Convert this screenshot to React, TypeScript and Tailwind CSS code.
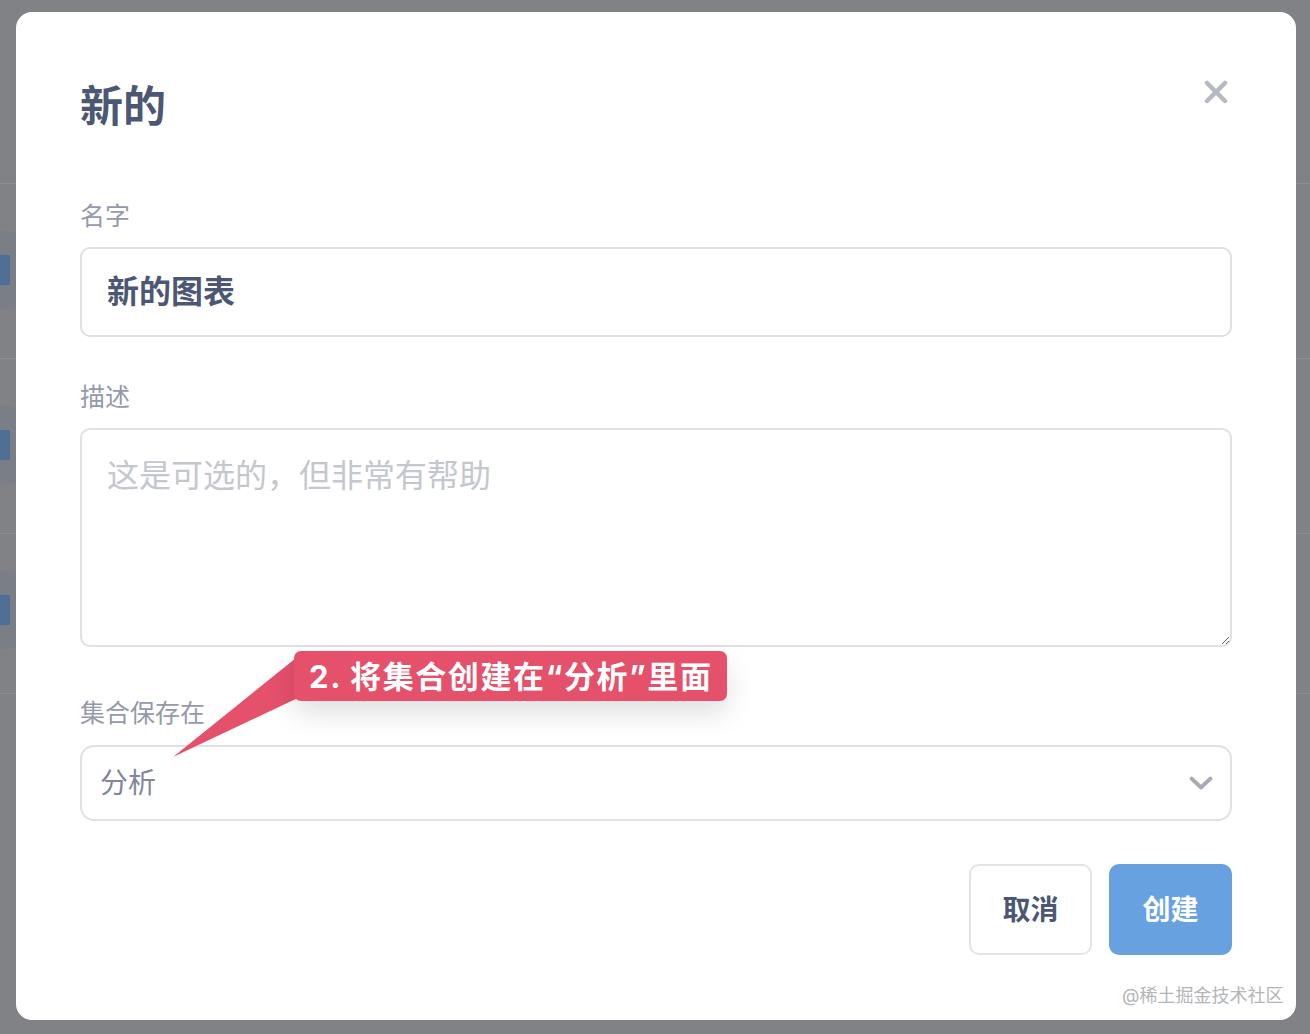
import React from 'react';

const CloseIcon = () => (
  <svg width="24" height="24" viewBox="0 0 24 24" className="block">
    <path d="M3 3 L21 21 M21 3 L3 21" stroke="#b5b9c1" strokeWidth="4.5" strokeLinecap="round" />
  </svg>
);

const Chevron = () => (
  <svg width="24" height="15" viewBox="0 0 24 15" className="block">
    <polyline points="2.5,2.5 12,11.5 21.5,2.5" fill="none" stroke="#a7abb5" strokeWidth="3.8" strokeLinecap="round" strokeLinejoin="round" />
  </svg>
);

const PageBehind = () => (
  <div className="absolute inset-0">
    <div className="absolute left-0 right-0 top-[183px] h-px bg-[#8b8d90]" />
    <div className="absolute left-0 right-0 top-[358px] h-px bg-[#8b8d90]" />
    <div className="absolute left-0 right-0 top-[533px] h-px bg-[#8b8d90]" />
    <div className="absolute left-0 right-0 top-[693px] h-px bg-[#8b8d90]" />
    {[270, 445, 610].map((y) => (
      <div key={y} className="absolute -left-[40px] w-[80px] h-[80px] rounded-full bg-[#7a7f87] flex items-center justify-end pr-[30px]" style={{ top: y - 40 }}>
        <div className="w-[10px] h-[30px] bg-[#4f6f95]" />
      </div>
    ))}
  </div>
);

export default function App() {
  return (
    <div className="relative w-full h-[1034px] bg-[#808285] overflow-hidden font-['Inter','Noto_Sans_CJK_SC',sans-serif]">
      <PageBehind />

      <div className="relative pt-[12px] px-[16px]">
        <div className="w-[1280px] h-[1008px] bg-white rounded-[16px] px-[64px] flex flex-col">
          {/* header */}
          <div className="mt-[60px] h-[68px] flex justify-between items-start">
            <h1 className="h-[68px] flex items-center text-[43px] font-bold text-[#4c5773] leading-none">新的</h1>
            <button className="mt-[8px] mr-[4px]">
              <CloseIcon />
            </button>
          </div>

          <label className="mt-[58px] h-[36px] flex items-center text-[25px] text-[#949aab] leading-none">名字</label>
          <div className="mt-[13px] h-[90px] border-2 border-[#dfe1e6] rounded-[10px] flex items-center pl-[25px]">
            <span className="text-[32px] font-semibold text-[#4c5773] leading-none">新的图表</span>
          </div>

          <label className="mt-[42px] h-[36px] flex items-center text-[25px] text-[#949aab] leading-none">描述</label>
          <textarea
            className="mt-[13px] h-[219px] w-full border-2 border-[#dfe1e6] rounded-[10px] pl-[25px] pt-[22px] text-[32px] leading-[48px] text-[#4c5773] placeholder:text-[#c4c7cd] resize-y outline-none"
            placeholder="这是可选的，但非常有帮助"
          />

          <label className="mt-[48px] h-[36px] flex items-center text-[25px] text-[#949aab] leading-none">集合保存在</label>
          <div className="mt-[14px] h-[76px] border-2 border-[#dfe1e6] rounded-[14px] flex items-center justify-between pl-[18px] pr-[17px]">
            <span className="text-[28px] text-[#81869a] leading-none">分析</span>
            <Chevron />
          </div>

          <div className="mt-[43px] flex justify-end gap-[17px]">
            <button className="w-[123px] h-[91px] border-2 border-[#e2e4e8] rounded-[10px] bg-white text-[28px] font-bold text-[#4c5773]">取消</button>
            <button className="w-[123px] h-[91px] rounded-[10px] bg-[#68a1e0] text-[28px] font-bold text-white">创建</button>
          </div>
        </div>
      </div>

      {/* callout */}
      <svg className="absolute left-[170px] top-[650px]" width="135" height="112" viewBox="0 0 135 112">
        <polygon points="126,8 3,107 132,46" fill="#e5506b" />
      </svg>
      <div className="absolute left-[294px] top-[651px] w-[433px] h-[50px] bg-[#e5506b] rounded-[7px] shadow-[0_12px_28px_rgba(0,0,0,0.13)] flex items-center pl-[15px]">
        <span className="text-[31px] font-bold text-white leading-none whitespace-nowrap tracking-[1.6px]">2. 将集合创建在“分析”里面</span>
      </div>

      <div className="absolute left-[1122px] top-[987px] text-[18px] text-[#b3b5b8] leading-none whitespace-nowrap">@稀土掘金技术社区</div>
    </div>
  );
}
